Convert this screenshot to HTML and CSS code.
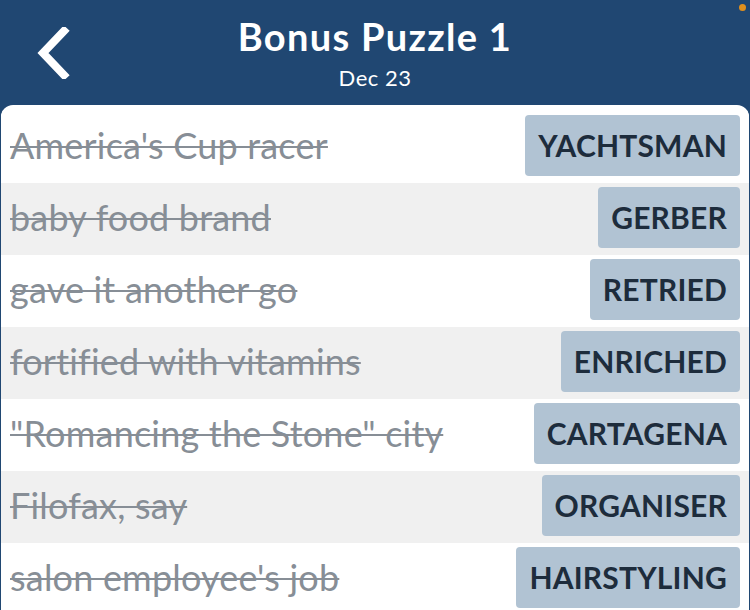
FILE: index.html
```html
<!DOCTYPE html>
<html>
<head>
<meta charset="utf-8">
<link rel="stylesheet" href="styles.css">
</head>
<body>
<div class="app">
  <header class="topbar">
    <button class="back" aria-label="Back">
      <svg width="36" height="52" viewBox="0 0 36 52"><path d="M30 4 L9 26 L30 48" fill="none" stroke="#fff" stroke-width="8" stroke-linecap="square" stroke-linejoin="miter"/></svg>
    </button>
    <div class="titles">
      <h1 class="title">Bonus Puzzle 1</h1>
      <div class="subtitle">Dec 23</div>
    </div>
    <span class="dot"></span>
  </header>
  <main class="card">
    <div class="row"><span class="clue">America's Cup racer</span><span class="answer">YACHTSMAN</span></div>
    <div class="row alt"><span class="clue">baby food brand</span><span class="answer">GERBER</span></div>
    <div class="row"><span class="clue">gave it another go</span><span class="answer">RETRIED</span></div>
    <div class="row alt"><span class="clue">fortified with vitamins</span><span class="answer">ENRICHED</span></div>
    <div class="row"><span class="clue">"Romancing the Stone" city</span><span class="answer">CARTAGENA</span></div>
    <div class="row alt"><span class="clue">Filofax, say</span><span class="answer">ORGANISER</span></div>
    <div class="row"><span class="clue">salon employee's job</span><span class="answer">HAIRSTYLING</span></div>
  </main>
</div>
</body>
</html>
```
FILE: styles.css
```css
* { box-sizing: border-box; }
html, body { margin: 0; padding: 0; }
body {
  width: 750px;
  height: 610px;
  overflow: hidden;
  background: #204772;
  font-family: Lato, "Noto Sans", sans-serif;
}
.app { display: flex; flex-direction: column; height: 610px; }
.topbar {
  position: relative;
  height: 105px;
  flex: none;
  display: flex;
  justify-content: center;
  color: #fff;
}
.back {
  position: absolute;
  left: 34px;
  top: 27px;
  background: none;
  border: 0;
  padding: 0;
  line-height: 0;
}
.titles { text-align: center; padding-top: 13px; }
.title {
  margin: 0;
  font-size: 38px;
  font-weight: 700;
  line-height: 46px;
  letter-spacing: 1.3px;
}
.subtitle {
  font-size: 22px;
  line-height: 26px;
  margin-top: 6px;
  letter-spacing: 0.5px;
}
.dot {
  position: absolute;
  right: 4px;
  top: 4px;
  width: 7px;
  height: 7px;
  border-radius: 50%;
  background: #e0901e;
}
.card {
  flex: 1;
  background: #fff;
  border-radius: 12px 12px 0 0;
  margin: 0 1px;
  padding-top: 6px;
  overflow: hidden;
}
.row {
  height: 72px;
  display: flex;
  align-items: flex-start;
  justify-content: space-between;
  padding: 4px 9px 0 9px;
  background: #fff;
}
.row.alt { background: #f0f0f0; }
.clue {
  font-size: 36px;
  line-height: 61px;
  color: #878e96;
  text-decoration: line-through;
  text-decoration-thickness: 2px;
  letter-spacing: 0.2px;
}
.answer {
  height: 61px;
  line-height: 61px;
  padding: 0 13px;
  background: #b1c3d3;
  border-radius: 4px;
  color: #1d2c3c;
  font-size: 30px;
  font-weight: 700;
  letter-spacing: 0.2px;
}
```
